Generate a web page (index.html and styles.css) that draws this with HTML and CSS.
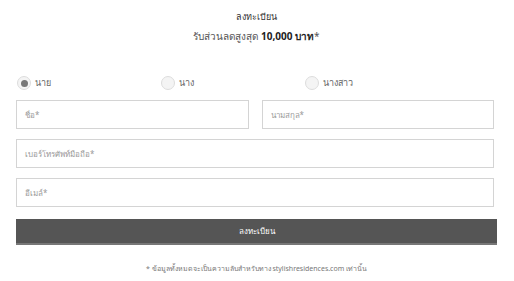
FILE: index.html
```html
<!DOCTYPE html>
<html lang="th">
<head>
<meta charset="UTF-8">
<title>ลงทะเบียน</title>
<link rel="stylesheet" href="styles.css">
</head>
<body>
<div class="register">
  <div class="title">ลงทะเบียน</div>
  <div class="subtitle">รับส่วนลดสูงสุด <b>10,000 บาท</b>*</div>

  <form class="form">
    <div class="radios">
      <label class="radio"><span class="dot checked"></span>นาย</label>
      <label class="radio"><span class="dot"></span>นาง</label>
      <label class="radio"><span class="dot"></span>นางสาว</label>
    </div>
    <div class="row two">
      <div class="field">ชื่อ*</div>
      <div class="field">นามสกุล*</div>
    </div>
    <div class="row"><div class="field">เบอร์โทรศัพท์มือถือ*</div></div>
    <div class="row"><div class="field">อีเมล์*</div></div>
    <div class="submit">ลงทะเบียน</div>
  </form>

  <p class="note">* ข้อมูลทั้งหมดจะเป็นความลับสำหรับทาง stylishresidences.com เท่านั้น</p>
</div>
</body>
</html>
```

FILE: styles.css
```css
body {
    margin: 0;
    background: #fff;
    font-family: "Noto Sans", "DejaVu Sans", sans-serif;
    color: #444;
}
.register {
    padding: 10px 17px 0 16px;
}
.title {
    text-align: center;
    font-size: 9px;
    line-height: 14px;
    color: #333;
}
.subtitle {
    text-align: center;
    font-size: 10px;
    line-height: 14px;
    margin-top: 5px;
    color: #555;
}
.subtitle b {
    color: #222;
}
.form {
    margin-top: 33px;
}
.radios {
    display: grid;
    grid-template-columns: 144px 144px 1fr;
    height: 14px;
    margin-bottom: 10px;
}
.radio {
    display: flex;
    align-items: center;
    gap: 4px;
    font-size: 9px;
    color: #666;
    padding-left: 1px;
}
.dot {
    width: 12px;
    height: 12px;
    border: 1px solid #ddd;
    border-radius: 50%;
    background: #f4f4f4;
    display: flex;
    align-items: center;
    justify-content: center;
}
.dot.checked::after {
    content: "";
    width: 7px;
    height: 7px;
    border-radius: 50%;
    background: #777;
}
.row {
    margin-bottom: 10px;
    margin-right: 3px;
}
.row.two {
    display: grid;
    grid-template-columns: 1fr 1fr;
    gap: 13px;
}
.field {
    height: 27px;
    border: 1px solid #d4d4d4;
    padding-left: 8px;
    font-size: 8px;
    line-height: 27px;
    color: #999;
}
.submit {
    background: #555;
    border-bottom: 2px solid #777;
    height: 24px;
    line-height: 24px;
    text-align: center;
    color: #fff;
    font-size: 8px;
    margin-top: 12px;
}
.note {
    text-align: center;
    font-size: 7px;
    color: #777;
    margin: 18px 0 0;
}
```
